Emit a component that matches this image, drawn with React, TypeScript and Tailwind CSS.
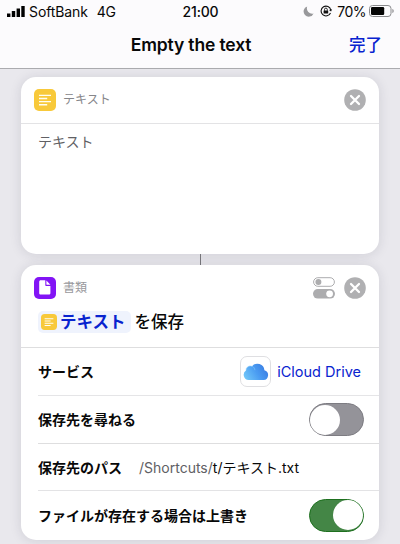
import type { FC, ReactNode } from "react";

const TextIcon: FC<{ className: string }> = ({ className }) => (
   <svg className={className} viewBox="0 0 22 22" fill="none">
      <rect width="22" height="22" rx="5" fill="#f8c93a" />
      <path d="M5 6.4h12M5 9.5h8.2M5 12.6h12M5 15.8h8.2" stroke="#fffdf2" strokeWidth="1.4" />
   </svg>
);

const FileIcon: FC = () => (
   <svg className="size-[22px] shrink-0" viewBox="0 0 22 22" fill="none">
      <rect width="22" height="22" rx="5" fill="#8214f5" />
      <path d="M6.8 3.3h4.5v4.6c0 .7.4 1.1 1.1 1.1h4v6.9c0 1-.6 1.6-1.6 1.6h-8c-1 0-1.6-.6-1.6-1.6v-11c0-1 .6-1.6 1.6-1.6Z" fill="#fff" />
      <path d="M12.4 3.6v3.6c0 .4.2.6.6.6h3.4Z" fill="#fff" />
   </svg>
);

const CloseIcon: FC = () => (
   <svg className="size-[22px] shrink-0" viewBox="0 0 22 22" fill="none">
      <circle cx="11" cy="11" r="10.8" fill="#b0b0b2" />
      <path d="m7 7 8 8m0-8-8 8" stroke="#fff" strokeWidth="2.3" strokeLinecap="round" />
   </svg>
);

const OptionsIcon: FC = () => (
   <svg className="h-[22px] w-[22px] shrink-0" viewBox="0 0 22 22" fill="none">
      <rect x="0.6" y="0.7" width="20.8" height="8.6" rx="4.3" stroke="#acacae" />
      <circle cx="5.4" cy="5" r="3" fill="#acacae" />
      <rect y="12" width="22" height="9.6" rx="4.8" fill="#acacae" />
      <circle cx="16.6" cy="16.8" r="3.4" fill="#fff" />
   </svg>
);

const CloudIcon: FC = () => (
   <svg className="w-[26px] h-[18px]" viewBox="0 0 26 18">
      <defs>
         <linearGradient id="cloud" x1="0" y1="0.7" x2="1" y2="0.3">
            <stop offset="0" stopColor="#70c5f8" />
            <stop offset="0.5" stopColor="#4b9df2" />
            <stop offset="1" stopColor="#397be2" />
         </linearGradient>
      </defs>
      <path
         d="M5.6 17A5.2 5.2 0 0 1 3 7.5a4.3 4.3 0 0 1 6-4.2A7 7 0 0 1 21.4 7.2a5 5 0 0 1-.8 9.8Z"
         fill="url(#cloud)"
      />
      <path d="M3 7.5a4.3 4.3 0 0 1 6-4.2c1.8.7 2.8 2.1 2.9 3.9" fill="none" stroke="#8dccfb" strokeWidth="0.5" />
   </svg>
);

const StatusBar: FC = () => (
   <div className="grid h-[22px] grid-cols-[1fr_auto_1fr] items-center pl-[7px] pr-[6px] text-[14px]">
      <div className="flex items-center">
         <svg className="w-[18px] h-[11px] mr-[4px]" viewBox="0 0 18 11">
            <path d="M0 7.5h3.4V11H0zM4.8 5h3.4v6H4.8zM9.6 2.5H13V11H9.6zM14.3 0h3.4v11h-3.4z" />
         </svg>
         <span className="tracking-[-0.1px]">SoftBank</span>
         <span className="ml-[9px] tracking-[-0.5px]">4G</span>
      </div>
      <div className="font-medium tracking-[-0.2px]">21:00</div>
      <div className="flex items-center justify-end">
         <svg className="size-[11px] mr-[6px]" viewBox="0 0 11 11">
            <path d="M4.2.5a5.2 5.2 0 1 0 6.4 7A5.4 5.4 0 0 1 4.2.5Z" fill="#98989b" />
         </svg>
         <svg className="size-[12px] mr-[5px]" viewBox="0 0 12 12" fill="none" stroke="#111" strokeWidth="1.1">
            <path d="M10.5 8A4.9 4.9 0 1 1 10.8 5" />
            <path d="m9 4.9 2.1 1.5L12 4.2Z" fill="#111" stroke="none" />
            <path d="M4.5 5.7V4.5a1.4 1.4 0 0 1 2.8 0v1.2" strokeWidth="0.9" />
            <rect x="3.6" y="5.4" width="4.6" height="3.2" rx="0.4" fill="#111" stroke="none" />
         </svg>
         <span className="mr-[3px] tracking-[-0.5px]">70%</span>
         <svg className="w-[25px] h-[12px]" viewBox="0 0 25 12">
            <rect x="0.5" y="0.5" width="21.5" height="11" rx="3" fill="none" stroke="#8a8a8d" />
            <rect x="2" y="2" width="13.2" height="8" rx="1.2" fill="#050505" />
            <path d="M23.4 4c1.7.4 1.7 3.6 0 4Z" fill="#8a8a8d" />
         </svg>
      </div>
   </div>
);

const Card: FC<{ className: string; children: ReactNode }> = ({ className, children }) => (
   <section className={`mx-[21px] rounded-[15px] bg-white shadow-[0_1px_12px_rgba(40,40,60,0.13)] ${className}`}>{children}</section>
);

const Row: FC<{ label: string; className: string; children: ReactNode }> = ({ label, className, children }) => (
   <div className={`ml-[17px] flex items-center pr-[15px] ${className}`}>
      <span className="font-bold text-[14px] whitespace-nowrap">{label}</span>
      {children}
   </div>
);

const Toggle: FC<{ on?: boolean }> = ({ on }) => (
   <div
      className={`ml-auto flex h-[33px] w-[55px] items-center rounded-full border-[1.5px] ${
         on ? "justify-end border-[#1e701f] bg-[#448646]" : "justify-start border-[#7d7c82] bg-[#949399]"
      }`}
   >
      <div className="size-[30px] rounded-full bg-white" />
   </div>
);

export default function App() {
   return (
      <div className="h-[544px] w-[400px] overflow-hidden bg-[#e9e8ed] text-[#080808] font-['Inter','Noto_Sans_CJK_JP',sans-serif]">
         <header className="h-[69px] border-b border-[#ababaf] bg-[#fcfbfd]">
            <StatusBar />
            <div className="grid h-[46px] grid-cols-[1fr_auto_1fr] items-center pr-[18px]">
               <h1 className="col-start-2 text-[17.5px] font-semibold tracking-[-0.15px]">Empty the text</h1>
               <button className="justify-self-end text-[16.5px] font-medium text-[#0823cf]">完了</button>
            </div>
         </header>

         <main className="pt-[8px]">
            <Card className="h-[177px]">
               <div className="flex h-[47px] items-center border-b border-[#e3e3e5] pl-[13px] pr-[13px]">
                  <TextIcon className="size-[22px] shrink-0" />
                  <span className="ml-[7px] text-[12px] text-[#86868a]">テキスト</span>
                  <div className="ml-auto">
                     <CloseIcon />
                  </div>
               </div>
               <p className="pl-[17px] pt-[8px] text-[14px] leading-[20px] text-[#606064]">テキスト</p>
            </Card>

            <div className="mx-auto h-[11px] w-px bg-[#77777b]" />

            <Card className="h-[275px]">
               <div className="h-[83px] border-b border-[#dededf]">
                  <div className="flex h-[46px] items-center px-[13px]">
                     <FileIcon />
                     <span className="ml-[7px] text-[12px] text-[#98989c]">書類</span>
                     <div className="ml-auto flex gap-[9px]">
                        <OptionsIcon />
                        <CloseIcon />
                     </div>
                  </div>
                  <div className="flex h-[22px] items-center pl-[17px] text-[16.5px] font-bold">
                     <span className="flex h-[22px] items-center rounded-[5px] bg-[#eff3fd] pl-[3px] pr-[5px] text-[#0823cf]">
                        <TextIcon className="mr-[3px] size-[16px]" />
                        テキスト
                     </span>
                     <span className="ml-[4px] font-medium">を保存</span>
                  </div>
               </div>
               <Row label="サービス" className="h-[48px] border-b border-[#e5e5e7]">
                  <span className="ml-auto mr-[6px] flex size-[31px] items-center justify-center rounded-[7px] border border-[#dfdfe2]">
                     <CloudIcon />
                  </span>
                  <span className="mr-[3px] text-[14.5px] text-[#0823cf]">iCloud Drive</span>
               </Row>
               <Row label="保存先を尋ねる" className="h-[48px] border-b border-[#dededf]">
                  <Toggle />
               </Row>
               <Row label="保存先のパス" className="h-[47px] border-b border-[#e3e3e5]">
                  <span className="ml-[17px] text-[14px] whitespace-nowrap">
                     <span className="text-[#606064]">/Shortcuts/</span>t/テキスト.txt
                  </span>
               </Row>
               <Row label="ファイルが存在する場合は上書き" className="h-[48px]">
                  <Toggle on />
               </Row>
            </Card>
         </main>
      </div>
   );
}
